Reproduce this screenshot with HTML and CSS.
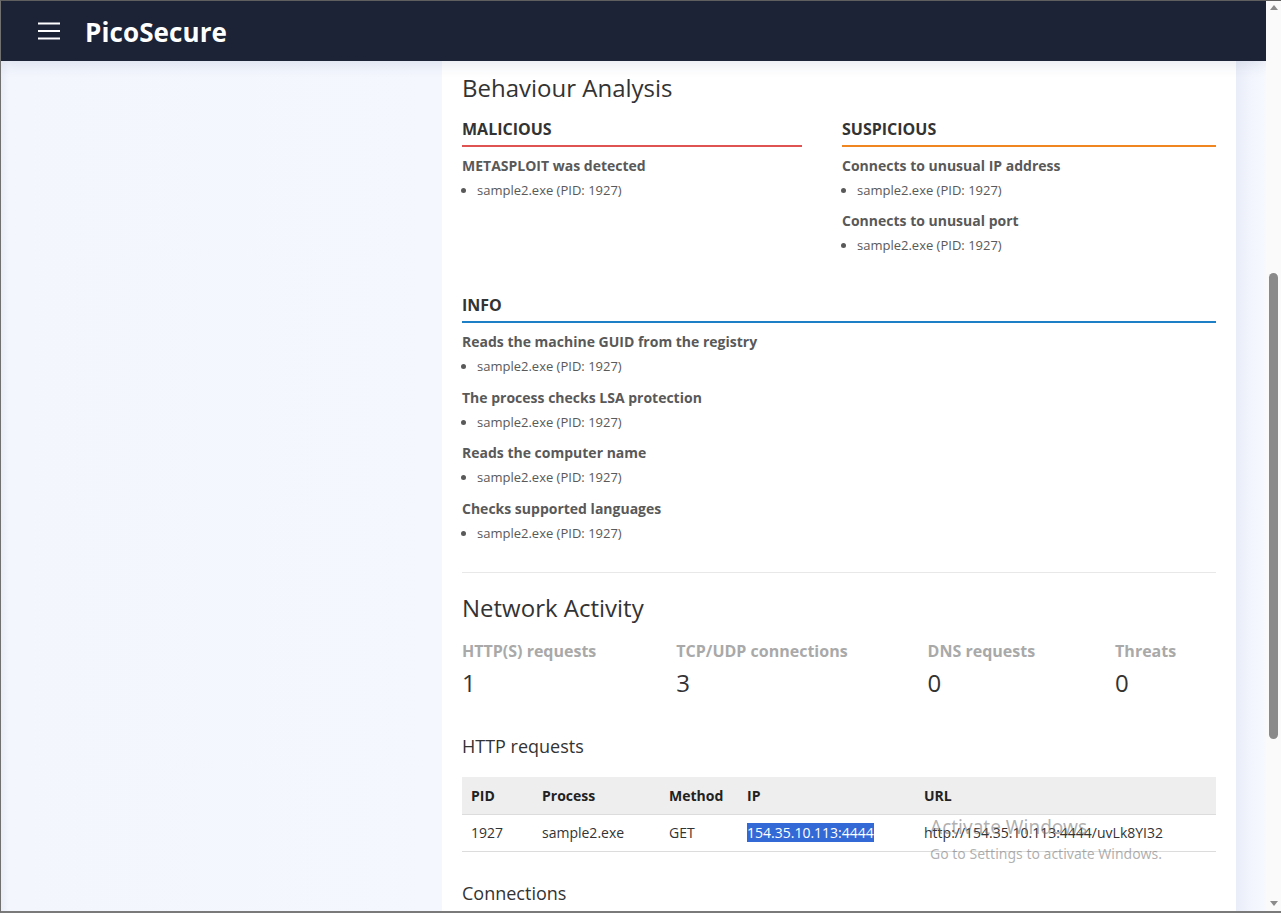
FILE: index.html
```html
<!DOCTYPE html>
<html lang="en">
<head>
<meta charset="utf-8">
<title>PicoSecure</title>
<link rel="stylesheet" href="styles.css">
</head>
<body>
<div class="window">
  <div class="viewport">
    <header class="topbar">
      <button class="menu-btn" aria-label="Menu">
        <svg width="22" height="18" viewBox="0 0 22 18"><path d="M0 1.5h22M0 9h22M0 16.5h22" stroke="#fff" stroke-width="2" fill="none"/></svg>
      </button>
      <span class="brand">PicoSecure</span>
    </header>
    <div class="main">
      <aside class="side"></aside>
      <section class="card">
        <h2 class="title">Behaviour Analysis</h2>
        <div class="two-col">
          <div class="sev">
            <h3 class="sev-head malicious">MALICIOUS</h3>
            <div class="group">
              <div class="group-title">METASPLOIT was detected</div>
              <ul class="procs"><li>sample2.exe (PID: 1927)</li></ul>
            </div>
          </div>
          <div class="sev">
            <h3 class="sev-head suspicious">SUSPICIOUS</h3>
            <div class="group">
              <div class="group-title">Connects to unusual IP address</div>
              <ul class="procs"><li>sample2.exe (PID: 1927)</li></ul>
            </div>
            <div class="group">
              <div class="group-title">Connects to unusual port</div>
              <ul class="procs"><li>sample2.exe (PID: 1927)</li></ul>
            </div>
          </div>
        </div>
        <div class="sev info-block">
          <h3 class="sev-head info">INFO</h3>
          <div class="group">
            <div class="group-title">Reads the machine GUID from the registry</div>
            <ul class="procs"><li>sample2.exe (PID: 1927)</li></ul>
          </div>
          <div class="group">
            <div class="group-title">The process checks LSA protection</div>
            <ul class="procs"><li>sample2.exe (PID: 1927)</li></ul>
          </div>
          <div class="group">
            <div class="group-title">Reads the computer name</div>
            <ul class="procs"><li>sample2.exe (PID: 1927)</li></ul>
          </div>
          <div class="group">
            <div class="group-title">Checks supported languages</div>
            <ul class="procs"><li>sample2.exe (PID: 1927)</li></ul>
          </div>
        </div>
        <hr class="divider">
        <h2 class="title net-title">Network Activity</h2>
        <div class="stats">
          <div class="stat"><div class="stat-label">HTTP(S) requests</div><div class="stat-value">1</div></div>
          <div class="stat"><div class="stat-label">TCP/UDP connections</div><div class="stat-value">3</div></div>
          <div class="stat"><div class="stat-label">DNS requests</div><div class="stat-value">0</div></div>
          <div class="stat"><div class="stat-label">Threats</div><div class="stat-value">0</div></div>
        </div>
        <h4 class="sub-title">HTTP requests</h4>
        <table class="req-table">
          <thead>
            <tr><th class="c-pid">PID</th><th class="c-proc">Process</th><th class="c-method">Method</th><th class="c-ip">IP</th><th>URL</th></tr>
          </thead>
          <tbody>
            <tr><td>1927</td><td>sample2.exe</td><td>GET</td><td><span class="selected">154.35.10.113:4444</span></td><td>http://154.35.10.113:4444/uvLk8YI32</td></tr>
          </tbody>
        </table>
        <h4 class="sub-title conn-title">Connections</h4>
      </section>
      <div class="gutter"></div>
    </div>
    <div class="activate">
      <div class="act-1">Activate Windows</div>
      <div class="act-2">Go to Settings to activate Windows.</div>
    </div>
  </div>
  <div class="scrollbar">
    <div class="arrow up"></div>
    <div class="track"><div class="thumb"></div></div>
    <div class="arrow down"></div>
  </div>
</div>
</body>
</html>
```
FILE: styles.css
```css
* { box-sizing: border-box; }
html, body { margin: 0; padding: 0; height: 100%; overflow: hidden; }
body {
  font-family: "Open Sans", "Noto Sans", sans-serif;
  color: #333;
  background: #fff;
}
.window {
  height: 913px;
  display: flex;
  border-top: 1px solid #5f5f5f;
  border-left: 1px solid #707070;
  border-bottom: 2px solid #7a7a7a;
}
.viewport {
  flex: 1;
  display: flex;
  flex-direction: column;
  position: relative;
  overflow: hidden;
}
.topbar {
  height: 60px;
  flex: none;
  background: #1c2337;
  display: flex;
  align-items: center;
  padding-left: 37px;
  position: relative;
  z-index: 2;
  box-shadow: 0 3px 14px rgba(40, 55, 110, 0.12);
}
.menu-btn {
  background: none;
  border: 0;
  padding: 0;
  width: 22px;
  height: 18px;
  display: flex;
  margin-right: 25px;
}
.brand {
  color: #fff;
  font-weight: 700;
  font-size: 26px;
  letter-spacing: 0.1px;
  line-height: 1;
  margin-top: 1px;
}
.main {
  flex: 1;
  display: flex;
  min-height: 0;
}
.side {
  width: 441px;
  flex: none;
  background: linear-gradient(90deg, #e9edf7 0, #f3f6fd 8px, #f4f7fe 100%);
}
.card {
  width: 794px;
  flex: none;
  background: #fff;
  padding: 11px 20px 0 20px;
}
.gutter {
  flex: 1;
  background: linear-gradient(90deg, #e9edf8 0, #f2f5fd 50%, #f7f9ff 100%);
}
.title {
  font-size: 24px;
  font-weight: 400;
  line-height: 32px;
  margin: 0;
  color: #333;
}
.two-col {
  display: grid;
  grid-template-columns: 340px 374px;
  column-gap: 40px;
  margin-top: 14px;
}
.sev-head {
  margin: 0;
  font-size: 16px;
  font-weight: 700;
  line-height: 22px;
  padding-bottom: 5px;
  border-bottom: 2px solid #ccc;
  color: #333;
}
.sev-head.malicious { border-color: #e05353; }
.sev-head.suspicious { border-color: #f0861f; }
.sev-head.info { border-color: #1d80c6; }
.group { margin-top: 11px; }
.info-block .group { margin-top: 11.5px; }
.sev-head + .group,
.info-block .sev-head + .group { margin-top: 9px; }
.group-title {
  font-size: 14px;
  font-weight: 700;
  line-height: 20px;
  color: #595959;
}
.procs {
  margin: 4px 0 0 0;
  padding-left: 15px;
  font-size: 13px;
  line-height: 20px;
  color: #595959;
}
.info-block { margin-top: 39px; }
.divider {
  border: 0;
  border-top: 1px solid #e8e8e8;
  margin: 29.5px 0 0 0;
}
.net-title { margin-top: 19px; }
.stats {
  display: flex;
  gap: 80px;
  margin-top: 16px;
}
.stat-label {
  font-size: 16px;
  font-weight: 700;
  line-height: 22px;
  color: #a9a9a9;
}
.stat-value {
  font-size: 24px;
  line-height: 32px;
  margin-top: 5px;
  color: #333;
}
.sub-title {
  font-size: 18px;
  font-weight: 400;
  line-height: 26px;
  margin: 34px 0 0 0;
  color: #333;
}
.req-table {
  width: 100%;
  border-collapse: collapse;
  margin-top: 18px;
  font-size: 14px;
}
.req-table th, .req-table td {
  text-align: left;
  padding: 8px 9px;
  line-height: 20px;
  border-bottom: 1px solid #dcdcdc;
}
.req-table th {
  background: #eeeeee;
  font-weight: 700;
  color: #222;
  padding-top: 9px;
}
.req-table td { color: #333; }
.c-pid { width: 71px; }
.c-proc { width: 127px; }
.c-method { width: 78px; }
.c-ip { width: 177px; }
.selected {
  background: #3369d6;
  color: #fff;
}
.conn-title { margin-top: 28px; }
.activate {
  position: absolute;
  left: 929px;
  top: 813px;
  font-family: "Noto Sans", "Open Sans", sans-serif;
  color: rgba(110, 110, 110, 0.55);
  pointer-events: none;
}
.act-1 { font-size: 19px; line-height: 26px; }
.act-2 { font-size: 14px; line-height: 20px; margin-top: 4px; }
.scrollbar {
  width: 15px;
  flex: none;
  background: #fafafa;
  display: flex;
  flex-direction: column;
  align-items: center;
}
.arrow {
  width: 0;
  height: 0;
  border-left: 4.5px solid transparent;
  border-right: 4.5px solid transparent;
  flex: none;
}
.arrow.up { border-bottom: 5px solid #8b8b8b; margin-top: 4px; }
.arrow.down { border-top: 5px solid #8b8b8b; margin-bottom: 5px; }
.track {
  flex: 1;
  width: 100%;
  display: flex;
  justify-content: center;
  padding-top: 263px;
}
.thumb {
  width: 9px;
  height: 466px;
  background: #8a8a8a;
  border-radius: 5px;
}
```
